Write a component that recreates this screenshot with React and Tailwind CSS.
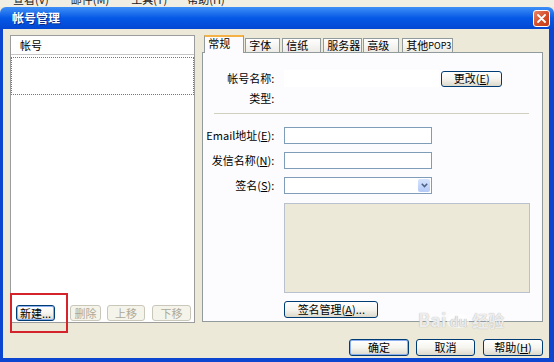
import React from "react";

const font = { fontFamily: '"Noto Sans CJK SC", "Liberation Sans", sans-serif' };

const XpButton = ({ children, className = "" }) => (
  <div
    className={`flex items-center justify-center whitespace-nowrap rounded-[3px] border border-[#003c74] bg-linear-to-b from-white via-[#f6f5ef] to-[#dcd8cb] text-[11px] leading-none text-black ${className}`}
  >
    {children}
  </div>
);

const OffButton = ({ children, className = "" }) => (
  <div
    className={`flex items-center justify-center whitespace-nowrap rounded-[3px] border border-[#c9c7ba] bg-[#f5f4ea] text-[11px] leading-none text-[#aca899] ${className}`}
  >
    {children}
  </div>
);

const Tab = ({ label, active, className = "" }) =>
  active ? (
    <div className={`relative z-10 -mb-px flex h-[18px] items-start whitespace-nowrap border-x border-t-[2px] border-x-[#919b9c] border-t-[#f4b246] bg-[#fcfcfe] pl-[3px] pt-[1px] text-[11px] leading-none ${className}`}>
      {label}
    </div>
  ) : (
    <div className={`flex h-[14px] items-center whitespace-nowrap border-x border-t border-[#919b9c] bg-linear-to-b from-white to-[#ecebe6] pl-[3px] text-[11px] leading-none ${className}`}>
      {label}
    </div>
  );

const Row = ({ label, children, className = "" }) => (
  <div className={`flex h-[17px] items-center ${className}`}>
    <div className="w-[71px] whitespace-nowrap text-right text-[11px] leading-none">{label}</div>
    <div className="ml-[10px] flex items-center">{children}</div>
  </div>
);

export default function App() {
  return (
    <div style={font} className="relative h-[362px] w-[554px] overflow-hidden bg-[#ece9d8] text-black">
      {/* menu bar behind the dialog, only its lower edge shows */}
      <div className="h-[7px] overflow-hidden bg-[#f1efe4]">
        <div className="-mt-[8px] flex text-[11px] leading-[14px] text-[#222]">
          <span className="ml-[13px]">查看(V)</span>
          <span className="ml-[22px]">邮件(M)</span>
          <span className="ml-[22px]">工具(T)</span>
          <span className="ml-[20px]">帮助(H)</span>
        </div>
      </div>

      {/* window */}
      <div className="flex h-[355px] flex-col">
        <div className="flex h-[22px] items-center rounded-t-[6px] bg-linear-to-b from-[#3d8ff6] via-[#0558e6] to-[#0347d3]">
          <span className="ml-[12px] text-[12px] font-bold leading-none text-white [text-shadow:1px_1px_0_#0a2a8a]">帐号管理</span>
          <div className="ml-auto mr-[4px] flex h-[17px] w-[17px] items-center justify-center rounded-[3px] border border-white bg-linear-to-br from-[#e9866a] via-[#d6502b] to-[#c33a16]">
            <svg width="9" height="9" viewBox="0 0 9 9">
              <path d="M1 1 L8 8 M8 1 L1 8" stroke="white" strokeWidth="1.8" strokeLinecap="round" />
            </svg>
          </div>
        </div>

        <div className="flex flex-1 flex-col border-b-[4px] border-l-[3px] border-r-[5px] border-[#0b45d0] bg-[#ece9d8] pl-[7px] pr-[6px] pt-[6px]">
          <div className="flex">
            {/* account list */}
            <div className="flex h-[288px] w-[186px] flex-col border border-[#9c9c9c] bg-white">
              <div className="flex h-[19px] items-center border-b border-[#c5c5c5] pl-[9px] text-[11px] leading-none">帐号</div>
              <div className="mt-[2px] h-[38px] border border-dotted border-[#777]" />
              <div className="flex-1" />
              <div className="mb-[1px] flex items-center pl-[5px]">
                <XpButton className="h-[16px] w-[39px] shadow-[inset_0_0_0_1px_#8cb0f0]">新建...</XpButton>
                <OffButton className="ml-[15px] h-[16px] w-[31px]">删除</OffButton>
                <OffButton className="ml-[6px] h-[16px] w-[38px]">上移</OffButton>
                <OffButton className="ml-[7px] h-[16px] w-[39px]">下移</OffButton>
              </div>
            </div>

            {/* tabs */}
            <div className="ml-[7px] flex w-[342px] flex-col">
              <div className="flex h-[17px] items-end pl-[2px]">
                <Tab label="常规" active className="w-[40px]" />
                <Tab label="字体" className="ml-[1px] w-[35px]" />
                <Tab label="信纸" className="ml-[2px] w-[39px]" />
                <Tab label="服务器" className="ml-[2px] w-[39px]" />
                <Tab label="高级" className="ml-[1px] w-[36px]" />
                <Tab
                  label={
                    <>
                      其他<span className="text-[9px]">POP3</span>
                    </>
                  }
                  className="ml-[3px] w-[51px]"
                />
              </div>
              <div className="flex h-[270px] flex-col border border-[#919b9c] bg-[#fcfcfe]">
                <Row label="帐号名称:" className="mt-[17px]">
                  <div className="h-[17px] w-[155px] bg-white" />
                  <XpButton className="ml-[2px] h-[16px] w-[61px]">
                    更改(<u>E</u>)
                  </XpButton>
                </Row>
                <Row label="类型:" className="mt-[3px]" />
                <div className="ml-[11px] mt-[6px] h-px w-[315px] bg-[#d0d0bf]" />
                <Row label={<>Email地址(<u>E</u>):</>} className="mt-[13px]">
                  <div className="h-[17px] w-[148px] border border-[#7f9db9] bg-white" />
                </Row>
                <Row label={<>发信名称(<u>N</u>):</>} className="mt-[8px]">
                  <div className="h-[17px] w-[148px] border border-[#7f9db9] bg-white" />
                </Row>
                <Row label={<>签名(<u>S</u>):</>} className="mt-[8px]">
                  <div className="flex h-[17px] w-[148px] items-center justify-end border border-[#7f9db9] bg-white pr-px">
                    <div className="flex h-[13px] w-[12px] items-center justify-center rounded-[2px] bg-linear-to-b from-[#d6e3fd] to-[#b3c9f7]">
                      <svg width="7" height="5" viewBox="0 0 7 5">
                        <path d="M0.8 0.8 L3.5 3.6 L6.2 0.8" stroke="#4d6185" strokeWidth="1.5" fill="none" />
                      </svg>
                    </div>
                  </div>
                </Row>
                <div className="ml-[81px] mt-[9px] h-[90px] w-[246px] border border-[#b9c2cc] bg-[#ece9d8]" />
                <XpButton className="ml-[81px] mt-[8px] h-[17px] w-[94px]">
                  签名管理(<u>A</u>)...
                </XpButton>
              </div>
            </div>
          </div>

          {/* dialog buttons */}
          <div className="mt-[16px] flex justify-end">
            <XpButton className="h-[17px] w-[60px] shadow-[inset_0_0_0_1px_#8cb0f0]">确定</XpButton>
            <XpButton className="ml-[7px] h-[17px] w-[59px]">取消</XpButton>
            <XpButton className="ml-[8px] h-[17px] w-[60px]">
              帮助(<u>H</u>)
            </XpButton>
          </div>
        </div>
      </div>

      {/* annotation box */}
      <div className="absolute left-[10px] top-[293px] h-[40px] w-[58px] border-[2px] border-[#d4232a]" />

      {/* watermark */}
      <div className="absolute left-[418px] top-[310px] flex items-end text-[18px] font-bold leading-none text-white/80 [text-shadow:0_0_1px_#9a9a9a]">
        <span>Bai</span>
        <span className="ml-px rounded-full bg-white/60 px-[2px] text-[14px] text-[#e8e8e8]">du</span>
        <span className="ml-[3px] text-[16px]">经验</span>
      </div>
    </div>
  );
}
